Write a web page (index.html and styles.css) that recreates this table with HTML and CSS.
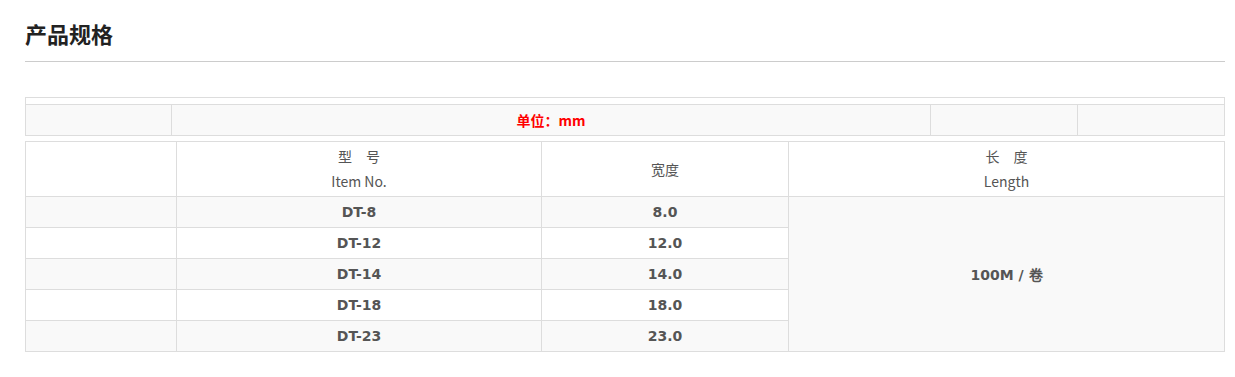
FILE: index.html
```html
<!DOCTYPE html>
<html lang="zh-CN">
<head>
<meta charset="utf-8">
<title>产品规格</title>
<link rel="stylesheet" href="styles.css">
</head>
<body>
<div class="page">
  <h2 class="title">产品规格</h2>
  <table class="unit-table">
    <colgroup><col class="u1"><col class="u2"><col class="u3"><col class="u4"></colgroup>
    <tr class="spacer-row"><td colspan="4"></td></tr>
    <tr class="unit-row">
      <td></td>
      <td class="unit">单位：mm</td>
      <td></td>
      <td></td>
    </tr>
  </table>
  <table class="spec-table">
    <colgroup><col class="s1"><col class="s2"><col class="s3"><col class="s4"></colgroup>
    <tr class="head">
      <td></td>
      <td>型　号<br>Item No.</td>
      <td>宽度</td>
      <td>长　度<br>Length</td>
    </tr>
    <tr class="row alt"><td></td><td class="num">DT-8</td><td class="num">8.0</td><td class="num len" rowspan="5">100M / 卷</td></tr>
    <tr class="row"><td></td><td class="num">DT-12</td><td class="num">12.0</td></tr>
    <tr class="row alt"><td></td><td class="num">DT-14</td><td class="num">14.0</td></tr>
    <tr class="row"><td></td><td class="num">DT-18</td><td class="num">18.0</td></tr>
    <tr class="row alt"><td></td><td class="num">DT-23</td><td class="num">23.0</td></tr>
  </table>
</div>
</body>
</html>
```
FILE: styles.css
```css
html, body {
  margin: 0;
  padding: 0;
  background: #fff;
}
body {
  font-family: "Noto Sans CJK SC", "Noto Sans", sans-serif;
  color: #555;
}
.page {
  width: 1199px;
  margin-left: 25px;
  padding-top: 18px;
}
.title {
  margin: 0;
  font-size: 22px;
  line-height: 30px;
  font-weight: bold;
  color: #222;
  padding-bottom: 13px;
  border-bottom: 1px solid #ccc;
  width: 1200px;
}
table {
  border-collapse: collapse;
  table-layout: fixed;
  width: 1199px;
}
td {
  border: 1px solid #ddd;
  padding: 0;
  text-align: center;
  vertical-align: middle;
}
.unit-table {
  margin-top: 35px;
}
.u1 { width: 146px; }
.u2 { width: 759px; }
.u3 { width: 147px; }
.u4 { width: 147px; }
.spacer-row td {
  height: 6px;
  background: #fff;
}
.unit-row td {
  height: 30px;
  background: #f9f9f9;
}
.unit {
  color: #f00;
  font-weight: bold;
  font-size: 14px;
}
.spec-table {
  margin-top: 5px;
}
.s1 { width: 151px; }
.s2 { width: 365px; }
.s3 { width: 247px; }
.s4 { width: 436px; }
.head td {
  height: 54px;
  font-size: 14px;
  line-height: 25px;
  background: #fff;
}
.row td {
  height: 30px;
}
.alt td {
  background: #f9f9f9;
}
.num {
  font-family: "DejaVu Sans", sans-serif;
  font-weight: bold;
  font-size: 14px;
  color: #555;
}
.len {
  background: #f9f9f9;
}
```
